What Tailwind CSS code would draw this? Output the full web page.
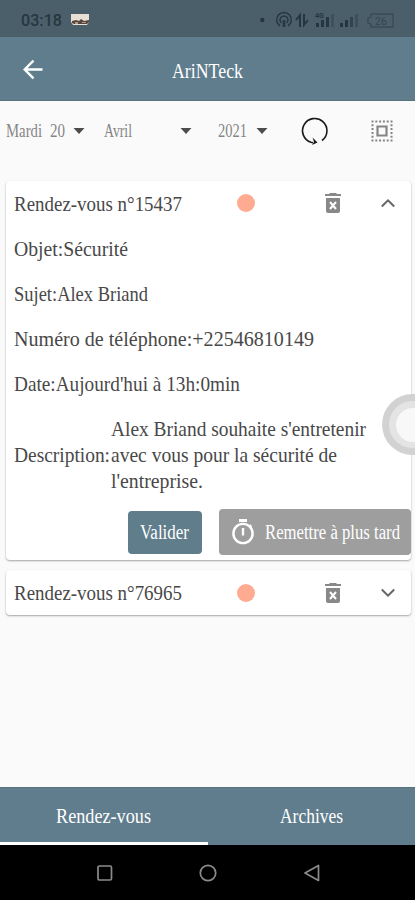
<!DOCTYPE html>
<html lang="fr">
<head>
<meta charset="utf-8">
<title>AriNTeck</title>
<script src="https://cdn.jsdelivr.net/npm/@tailwindcss/browser@4"></script>
</head>
<body class="bg-[#fafafa]">
<div class="relative flex h-[900px] w-[415px] flex-col overflow-hidden bg-[#fafafa] fill-[#484848] font-['Liberation_Serif',serif] text-[21px]">
  <header class="shrink-0 fill-white">
    <div class="flex h-[37px] items-center bg-[#4b5f6a] pt-[2px] pl-[21px]">
      <svg class="overflow-visible fill-[#26363f] font-['Roboto',sans-serif] text-[16px] font-medium" width="41" height="26"><text y="18.500" textLength="41" lengthAdjust="spacingAndGlyphs">03:18</text></svg>
      <svg class="ml-[8px]" width="21" height="13" viewBox="0 0 21 13"><path d="M1 1h18v8l-2 3H3L1 9z" fill="#e8dfd5"/><path d="M2 8l4-1 3 1 2-2 3 2 5-1v2l-2 2H4L2 10z" fill="#57463c"/><path d="M5 9h3v2H5zM12 9h4v1h-4z" fill="#b09a83"/></svg>
      <svg class="ml-[168px]" width="138" height="22" viewBox="259 8 138 22" fill="none" stroke="#26363f" stroke-width="1.500">
        <circle cx="262.300" cy="19" r="2.200" fill="#26363f" stroke="none"/>
        <g fill="none"><path d="M280 25a7.300 7.300 0 1 1 8 0M281.500 22a4 4 0 1 1 5 0"/><path d="M284 19v7" stroke-width="2.500"/>
        <path d="M300 26V14l-4 5M304 13v11l4-5" stroke-width="2"/></g>
        <g fill="#26363f" stroke="none"><path d="M316 22h3v4h-3zM321 19h3v7h-3zM326 16h3v10h-3zM340 22h3v4h-3zM345 19h3v7h-3z"/><path d="M331 13h3v13h-3zM355 13h3v13h-3z" opacity=".35"/><path d="M350 16h3v10h-3z" opacity=".65"/></g>
        <path d="M371 13h22v13h-22v-3l-3-1v-5l3-1z" fill="none" opacity=".5" stroke-width="1.300"/>
        <text x="315" y="17" font-family="Roboto" font-size="7" font-weight="700" fill="#26363f" stroke="none">4G</text>
        <text x="375" y="23.500" font-family="Roboto" font-size="10.500" fill="#26363f" opacity=".6" stroke="none">26</text>
      </svg>
    </div>
    <div class="flex h-[64px] items-center border-b border-[#58727f] bg-[#607d8d] pl-[21px]">
      <svg width="24" height="24" viewBox="0 0 24 24" fill="none" stroke="#fff" stroke-width="2.400"><path fill="none" d="M21.500 12.500H4M12.500 3.700L3.700 12.500l8.800 8.800"/></svg>
      <svg class="ml-[127px] overflow-visible" width="71" height="26"><text y="21.500" textLength="71" lengthAdjust="spacingAndGlyphs">AriNTeck</text></svg>
    </div>
  </header>

  <main class="flex min-h-0 flex-1 flex-col px-[6px]">
    <div class="flex h-[60px] shrink-0 items-center fill-[#858585] text-[18px]">
      <svg class="overflow-visible" width="36" height="26"><text y="19" textLength="36" lengthAdjust="spacingAndGlyphs">Mardi</text></svg>
      <svg class="ml-[8px] overflow-visible" width="15" height="26"><text y="19" textLength="15" lengthAdjust="spacingAndGlyphs">20</text></svg>
      <svg class="ml-[8px]" width="12" height="6" viewBox="0 0 12 6"><path d="M0.500 0h11L6 6z" fill="#4c4c4c"/></svg>
      <svg class="ml-[19px] overflow-visible" width="28" height="26"><text y="19" textLength="28" lengthAdjust="spacingAndGlyphs">Avril</text></svg>
      <svg class="ml-[48px]" width="12" height="6" viewBox="0 0 12 6"><path d="M0.500 0h11L6 6z" fill="#4c4c4c"/></svg>
      <svg class="ml-[26px] overflow-visible" width="29" height="26"><text y="19" textLength="29" lengthAdjust="spacingAndGlyphs">2021</text></svg>
      <svg class="ml-[9px]" width="12" height="6" viewBox="0 0 12 6"><path d="M0.500 0h11L6 6z" fill="#4c4c4c"/></svg>
      <svg class="ml-[32px]" width="30" height="30" viewBox="0 0 30 30" fill="none" stroke="#181818" stroke-width="1.600"><path fill="none" d="M22 24.500a12.200 12.200 0 1 0-11 1.800l2 .5"/><path d="M12.500 21.500l5 5-5.500 2.500 2-3z" fill="#181818" stroke="none"/></svg>
      <svg class="ml-[41px]" width="22" height="22" viewBox="0 0 22 22" fill="none" stroke="#858585"><path d="M6.500 6.500h9v9h-9z" stroke-width="2.200"/><path d="M.5 1.500h21M.5 20.500h21M1.500 .5v21M20.500 .5v21" stroke-width="2" stroke-dasharray="2 1.800"/></svg>
    </div>

    <section class="mt-[20px] h-[379px] w-[405px] shrink-0 rounded-[4px] bg-white shadow-[0_1px_2px_rgba(0,0,0,0.35)]">
      <div class="flex h-[44px] items-center pl-[8px]">
        <svg class="overflow-visible" width="168" height="26"><text y="20.500" textLength="168" lengthAdjust="spacingAndGlyphs">Rendez-vous n°15437</text></svg>
        <span class="ml-[55px] size-[18px] rounded-full bg-[#ffab91]"></span>
        <svg class="ml-[69px]" width="18" height="22" viewBox="0 0 18 22" fill="#888"><path d="M1 2h4l1-1h6l1 1h4v2H1zM2 6h14v13q0 2-2 2H4q-2 0-2-2z"/><path d="M6 10l6 7M12 10l-6 7" stroke="#fff" stroke-width="2"/></svg>
        <svg class="ml-[38px]" width="16" height="10" viewBox="0 0 16 10" fill="none" stroke="#666" stroke-width="2"><path d="M1.800 8.500L8 2.300l6.200 6.200"/></svg>
      </div>
      <div class="pt-px pl-[8px]">
        <div class="flex h-[45px] items-center"><svg class="overflow-visible" width="114" height="26"><text y="20" textLength="114" lengthAdjust="spacingAndGlyphs">Objet:Sécurité</text></svg></div>
        <div class="flex h-[45px] items-center"><svg class="overflow-visible" width="134" height="26"><text y="20" textLength="134" lengthAdjust="spacingAndGlyphs">Sujet:Alex Briand</text></svg></div>
        <div class="flex h-[45px] items-center"><svg class="overflow-visible" width="300" height="26"><text y="20" textLength="300" lengthAdjust="spacingAndGlyphs">Numéro de téléphone:+22546810149</text></svg></div>
        <div class="flex h-[45px] items-center"><svg class="overflow-visible" width="226" height="26"><text y="20" textLength="226" lengthAdjust="spacingAndGlyphs">Date:Aujourd'hui à 13h:0min</text></svg></div>
        <div class="flex h-[98px] items-center">
          <svg class="overflow-visible" width="97" height="26"><text y="20" textLength="96" lengthAdjust="spacingAndGlyphs">Description:</text></svg>
          <div class="flex flex-col">
            <svg class="overflow-visible" width="255" height="26"><text y="20" textLength="255" lengthAdjust="spacingAndGlyphs">Alex Briand souhaite s'entretenir</text></svg>
            <svg class="overflow-visible" width="226" height="26"><text y="20" textLength="226" lengthAdjust="spacingAndGlyphs">avec vous pour la sécurité de</text></svg>
            <svg class="overflow-visible" width="92" height="26"><text y="20" textLength="92" lengthAdjust="spacingAndGlyphs">l'entreprise.</text></svg>
          </div>
        </div>
      </div>
      <div class="flex items-center justify-end gap-[17px] fill-white pt-[5px] text-[20px]">
        <button class="flex h-[43px] w-[74px] items-center rounded-[4px] bg-[#607d8b] pl-[12px]"><svg class="overflow-visible" width="49" height="26"><text y="19.500" textLength="49" lengthAdjust="spacingAndGlyphs">Valider</text></svg></button>
        <button class="flex h-[46px] w-[192px] items-center rounded-[4px] bg-[#9e9e9e] pl-[12px]">
          <svg width="24" height="28" viewBox="0 0 24 28" fill="none" stroke="#fff"><path d="M8 2.500h8" stroke-width="3"/><circle cx="12" cy="15.500" r="9.600" stroke-width="2.400"/><path d="M12 10v7.500" stroke-width="2.400"/><path d="M18.500 7l2 2" stroke-width="2"/></svg>
          <svg class="ml-[10px] overflow-visible" width="135" height="26"><text y="19.500" textLength="135" lengthAdjust="spacingAndGlyphs">Remettre à plus tard</text></svg>
        </button>
      </div>
    </section>

    <section class="mt-[10px] flex h-[45px] w-[405px] shrink-0 items-center rounded-[4px] bg-white pl-[8px] shadow-[0_1px_2px_rgba(0,0,0,0.35)]">
      <svg class="overflow-visible" width="168" height="26"><text y="20" textLength="168" lengthAdjust="spacingAndGlyphs">Rendez-vous n°76965</text></svg>
      <span class="ml-[55px] size-[18px] rounded-full bg-[#ffab91]"></span>
      <svg class="ml-[69px]" width="18" height="22" viewBox="0 0 18 22" fill="#888"><path d="M1 2h4l1-1h6l1 1h4v2H1zM2 6h14v13q0 2-2 2H4q-2 0-2-2z"/><path d="M6 10l6 7M12 10l-6 7" stroke="#fff" stroke-width="2"/></svg>
      <svg class="ml-[38px]" width="16" height="10" viewBox="0 0 16 10" fill="none" stroke="#666" stroke-width="2"><path d="M1.800 1.500L8 7.700l6.200-6.200"/></svg>
    </section>
  </main>

  <nav class="grid h-[58px] shrink-0 grid-cols-2 border-t border-[#58727f] bg-[#607d8d] fill-white">
    <div class="flex items-center justify-center border-b-[3px] border-white"><svg class="overflow-visible" width="95" height="26"><text y="20.500" textLength="95" lengthAdjust="spacingAndGlyphs">Rendez-vous</text></svg></div>
    <div class="flex items-center justify-center border-b-[3px] border-transparent"><svg class="overflow-visible" width="63" height="26"><text y="20.500" textLength="63" lengthAdjust="spacingAndGlyphs">Archives</text></svg></div>
  </nav>
  <footer class="flex h-[55px] shrink-0 items-center bg-black pl-[96px]">
    <svg width="17" height="18" viewBox="0 0 17 18" fill="none" stroke="#8b8b8b" stroke-width="1.700"><rect x="2" y="2" width="13.500" height="14" rx="1.500"/></svg>
    <svg class="ml-[86px]" width="18" height="18" viewBox="0 0 18 18" fill="none" stroke="#8b8b8b" stroke-width="1.700"><circle cx="9" cy="9" r="7.700"/></svg>
    <svg class="ml-[86px]" width="18" height="18" viewBox="0 0 18 18" fill="none" stroke="#8b8b8b" stroke-width="1.700" stroke-linejoin="round"><path d="M15.500 1.500v15L2 9z"/></svg>
  </footer>

  <div class="absolute top-[394px] left-[382px] flex size-[61px] items-center justify-center rounded-full bg-[#d2d2d2]">
    <div class="flex size-[47px] items-center justify-center rounded-full bg-[#e4e4e4]"><div class="size-[34px] rounded-full bg-[#f8f8f8]"></div></div>
  </div>
</div>
</body>
</html>
